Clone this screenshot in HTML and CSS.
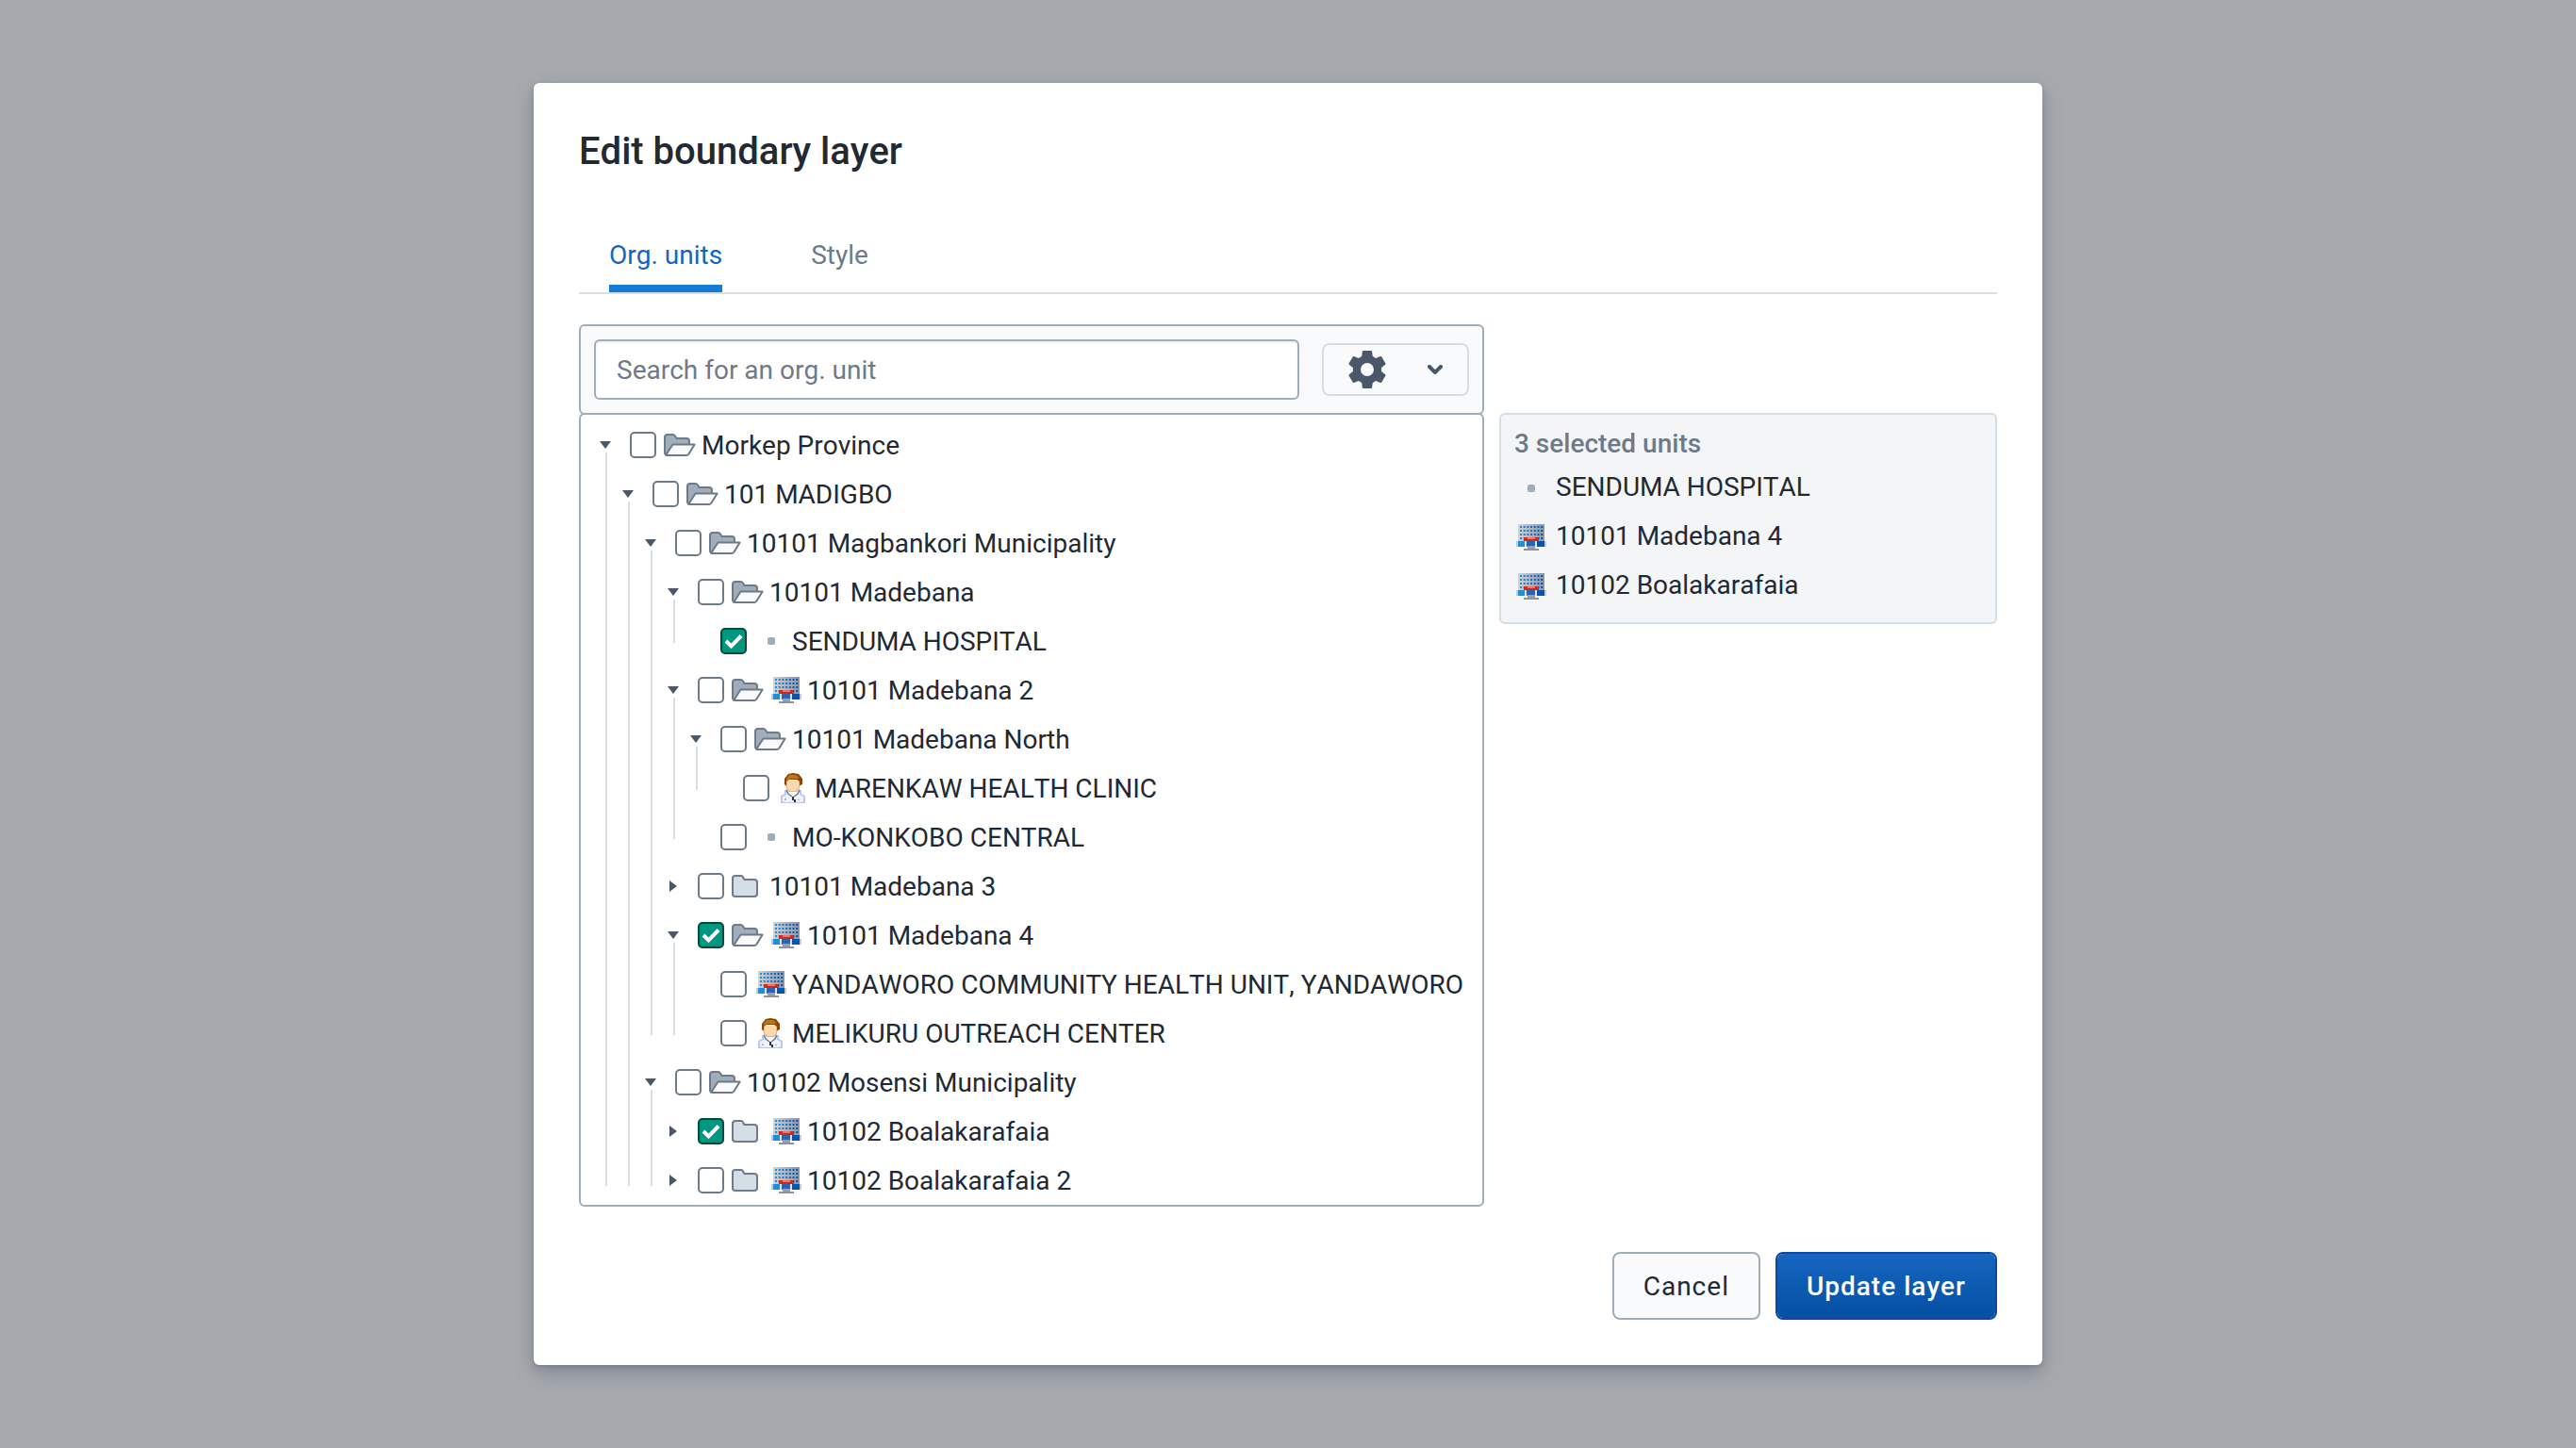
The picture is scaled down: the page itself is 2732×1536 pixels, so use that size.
FILE: index.html
```html
<!DOCTYPE html>
<html lang="en">
<head>
<meta charset="utf-8">
<title>Edit boundary layer</title>
<link rel="stylesheet" href="styles.css">
</head>
<body>
<svg class="sprite" aria-hidden="true">
  <defs>
    <linearGradient id="wall" x1="0" x2="1" y1="0" y2="0">
      <stop offset="0" stop-color="#d3d4d6"/>
      <stop offset="1" stop-color="#8a94a6"/>
    </linearGradient>
    <linearGradient id="glass" gradientUnits="userSpaceOnUse" x1="2" x2="30" y1="0" y2="0">
      <stop offset="0" stop-color="#2594d8"/>
      <stop offset="1" stop-color="#0449a8"/>
    </linearGradient>
    <symbol id="folder-open" viewBox="0 0 34 24">
      <path d="M2 22.500Q1 22 1 20V4Q1 1 4 1H9.500Q11 1 12 2.500L13.500 5H24Q27 5 27 8V12L20 22.500Z" fill="#a0adba" stroke="#6e7a8a" stroke-width="2"/>
      <path d="M9.500 11.500H32.600L26.500 21.500Q25.500 23 24 23H3.500Q2 23 3 21.500Z" fill="#f8fafc" stroke="#6e7a8a" stroke-width="2" stroke-linejoin="round"/>
    </symbol>
    <symbol id="folder" viewBox="0 0 28 24">
      <path d="M4 1H10Q11.500 1 12 2.500L13.500 5H24Q27 5 27 8V20Q27 23 24 23H4Q1 23 1 20V4Q1 1 4 1Z" fill="#d5dde5" stroke="#6e7a8a" stroke-width="2"/>
    </symbol>
    <symbol id="dot" viewBox="0 0 32 32"><rect x="12" y="12" width="8" height="8" rx="2" fill="#a0adba"/></symbol>
    <symbol id="hospital" viewBox="0 0 32 32">
      <path d="M2 2H30V22H2Z" fill="url(#wall)"/>
      <path d="M4 5H28.500M4 9H28.500M4 13H28.500M4 17H28.500" stroke="url(#glass)" stroke-width="2" stroke-dasharray="2 1.700" fill="none"/>
      <path d="M0 20H32V26H0Z" fill="#c3cbd9"/>
      <path d="M2 20H9V26H2Z" fill="#1f8fd6"/>
      <path d="M11 20H20V26H11Z" fill="#2a62b8"/>
      <path d="M22 20H30V26H22Z" fill="#0553b3"/>
      <path d="M9 20H11V26H9ZM20 20H22V26H20Z" fill="#dfe5ef"/>
      <path d="M8 16H24V20H8Z" fill="#cc2a1e"/>
      <path d="M12 16H20V18H12Z" fill="#ea7a68"/>
      <path d="M12 25H20V28H12Z" fill="#98a0ac"/>
      <path d="M8 28H24V30H8Z" fill="#8b939f"/>
    </symbol>
    <symbol id="doctor" viewBox="0 0 32 32">
      <path d="M6 18H24V22L28 24V32H2V24L6 22Z" fill="#bcc9ee"/>
      <path d="M8 20H22V23L26 25V30L24 31H6L4 30V25L8 23Z" fill="#eef4fd"/>
      <path d="M9 18H21L15 27Z" fill="#ffffff"/>
      <path d="M7 9Q4 11 7 14H8V17L11 20H19L22 17V14H23Q26 11 23 9Z" fill="#eab67f"/>
      <path d="M9 8H21V16L18 19H12L9 16Z" fill="#fad9b0"/>
      <path d="M6 12V6L10 1L15 0L21 1L25 6V12L22 13V9L19 7H11L8 9V13Z" fill="#8a4608"/>
      <path d="M8 6L11 2H18L22 5L19 6H12L8 8Z" fill="#c27414"/>
      <path d="M8 18L10 22L14 25M22 18L20 22L16 25" fill="none" stroke="#6b7796" stroke-width="1.500"/>
      <path d="M14 25H16V28H18V31H16V29H14Z" fill="#2e3345"/>
      <path d="M6 27H8V29H6ZM20 28H22V29H20Z" fill="#a9baf0"/>
    </symbol>
    <symbol id="arrow-down" viewBox="0 0 12 8"><path d="M0 0H12L6 8Z" fill="#4a5768"/></symbol>
    <symbol id="arrow-right" viewBox="0 0 8 12"><path d="M0 0L8 6L0 12Z" fill="#4a5768"/></symbol>
  </defs>
</svg>

<main class="modal" role="dialog" aria-labelledby="dialog-title">
  <h1 class="modal-title" id="dialog-title">Edit boundary layer</h1>

  <div class="tabs" role="tablist">
    <button class="tab tab-active" type="button" role="tab" aria-selected="true">Org. units</button>
    <button class="tab" type="button" role="tab" aria-selected="false">Style</button>
  </div>

  <div class="columns">
    <section class="picker">
      <div class="toolbar">
        <input class="search" type="text" placeholder="Search for an org. unit" aria-label="Search for an org. unit">
        <button class="settings" type="button" aria-label="Selection options">
          <svg class="gear" viewBox="0 0 40 40"><path fill="#4a5768" fill-rule="evenodd" d="M15.800 0H24.200Q25 0 25.100 .8L25.800 6L29.200 8L34 6Q34.900 5.700 35.300 6.400L39.400 13.500Q39.800 14.200 39.200 14.700L35.100 18V22L39.200 25.300Q39.800 25.800 39.400 26.500L35.300 33.600Q34.900 34.300 34 34L29.200 32L25.800 34L25.100 39.200Q25 40 24.200 40H15.800Q15 40 14.900 39.200L14.200 34L10.800 32L6 34Q5.100 34.300 4.700 33.600L.6 26.500Q.2 25.800 .8 25.300L4.900 22V18L.8 14.700Q.2 14.200 .6 13.500L4.700 6.400Q5.100 5.700 6 6L10.800 8L14.200 6L14.900 .8Q15 0 15.800 0ZM20 13A7 7 0 1 0 20 27A7 7 0 1 0 20 13Z"/></svg>
          <svg class="chevron" viewBox="0 0 16 10"><path d="M2 2L8 8L14 2" fill="none" stroke="#4a5768" stroke-width="4" stroke-linecap="round" stroke-linejoin="round"/></svg>
        </button>
      </div>

      <div class="tree">
        <ul class="nodes">
          <li class="node node-open node-continues">
            <div class="row">
              <button class="toggle" type="button" aria-label="Collapse"><svg class="down"><use href="#arrow-down"/></svg></button>
              <label class="unit"><input class="check" type="checkbox"><span class="slot"><svg class="folder-open"><use href="#folder-open"/></svg></span><span class="unit-name">Morkep Province</span></label>
            </div>
            <ul class="nodes nested">
              <li class="node node-open node-continues">
                <div class="row">
                  <button class="toggle" type="button" aria-label="Collapse"><svg class="down"><use href="#arrow-down"/></svg></button>
                  <label class="unit"><input class="check" type="checkbox"><span class="slot"><svg class="folder-open"><use href="#folder-open"/></svg></span><span class="unit-name">101 MADIGBO</span></label>
                </div>
                <ul class="nodes nested">
                  <li class="node node-open">
                    <div class="row">
                      <button class="toggle" type="button" aria-label="Collapse"><svg class="down"><use href="#arrow-down"/></svg></button>
                      <label class="unit"><input class="check" type="checkbox"><span class="slot"><svg class="folder-open"><use href="#folder-open"/></svg></span><span class="unit-name">10101 Magbankori Municipality</span></label>
                    </div>
                    <ul class="nodes nested">
                      <li class="node node-open">
                        <div class="row">
                          <button class="toggle" type="button" aria-label="Collapse"><svg class="down"><use href="#arrow-down"/></svg></button>
                          <label class="unit"><input class="check" type="checkbox"><span class="slot"><svg class="folder-open"><use href="#folder-open"/></svg></span><span class="unit-name">10101 Madebana</span></label>
                        </div>
                        <ul class="nodes nested">
                          <li class="node">
                            <div class="row leaf">
                              <label class="unit"><input class="check" type="checkbox" checked><span class="slot slot-symbol"><svg class="symbol"><use href="#dot"/></svg></span><span class="unit-name">SENDUMA HOSPITAL</span></label>
                            </div>
                          </li>
                        </ul>
                      </li>
                      <li class="node node-open">
                        <div class="row">
                          <button class="toggle" type="button" aria-label="Collapse"><svg class="down"><use href="#arrow-down"/></svg></button>
                          <label class="unit"><input class="check" type="checkbox"><span class="slot"><svg class="folder-open"><use href="#folder-open"/></svg></span><span class="slot slot-symbol"><svg class="symbol"><use href="#hospital"/></svg></span><span class="unit-name">10101 Madebana 2</span></label>
                        </div>
                        <ul class="nodes nested">
                          <li class="node node-open">
                            <div class="row">
                              <button class="toggle" type="button" aria-label="Collapse"><svg class="down"><use href="#arrow-down"/></svg></button>
                              <label class="unit"><input class="check" type="checkbox"><span class="slot"><svg class="folder-open"><use href="#folder-open"/></svg></span><span class="unit-name">10101 Madebana North</span></label>
                            </div>
                            <ul class="nodes nested">
                              <li class="node">
                                <div class="row leaf">
                                  <label class="unit"><input class="check" type="checkbox"><span class="slot slot-symbol"><svg class="symbol"><use href="#doctor"/></svg></span><span class="unit-name">MARENKAW HEALTH CLINIC</span></label>
                                </div>
                              </li>
                            </ul>
                          </li>
                          <li class="node">
                            <div class="row leaf">
                              <label class="unit"><input class="check" type="checkbox"><span class="slot slot-symbol"><svg class="symbol"><use href="#dot"/></svg></span><span class="unit-name">MO-KONKOBO CENTRAL</span></label>
                            </div>
                          </li>
                        </ul>
                      </li>
                      <li class="node">
                        <div class="row">
                          <button class="toggle" type="button" aria-label="Expand"><svg class="right"><use href="#arrow-right"/></svg></button>
                          <label class="unit"><input class="check" type="checkbox"><span class="slot"><svg class="folder"><use href="#folder"/></svg></span><span class="unit-name">10101 Madebana 3</span></label>
                        </div>
                      </li>
                      <li class="node node-open">
                        <div class="row">
                          <button class="toggle" type="button" aria-label="Collapse"><svg class="down"><use href="#arrow-down"/></svg></button>
                          <label class="unit"><input class="check" type="checkbox" checked><span class="slot"><svg class="folder-open"><use href="#folder-open"/></svg></span><span class="slot slot-symbol"><svg class="symbol"><use href="#hospital"/></svg></span><span class="unit-name">10101 Madebana 4</span></label>
                        </div>
                        <ul class="nodes nested">
                          <li class="node">
                            <div class="row leaf">
                              <label class="unit"><input class="check" type="checkbox"><span class="slot slot-symbol"><svg class="symbol"><use href="#hospital"/></svg></span><span class="unit-name">YANDAWORO COMMUNITY HEALTH UNIT, YANDAWORO</span></label>
                            </div>
                          </li>
                          <li class="node">
                            <div class="row leaf">
                              <label class="unit"><input class="check" type="checkbox"><span class="slot slot-symbol"><svg class="symbol"><use href="#doctor"/></svg></span><span class="unit-name">MELIKURU OUTREACH CENTER</span></label>
                            </div>
                          </li>
                        </ul>
                      </li>
                    </ul>
                  </li>
                  <li class="node node-open node-continues">
                    <div class="row">
                      <button class="toggle" type="button" aria-label="Collapse"><svg class="down"><use href="#arrow-down"/></svg></button>
                      <label class="unit"><input class="check" type="checkbox"><span class="slot"><svg class="folder-open"><use href="#folder-open"/></svg></span><span class="unit-name">10102 Mosensi Municipality</span></label>
                    </div>
                    <ul class="nodes nested">
                      <li class="node">
                        <div class="row">
                          <button class="toggle" type="button" aria-label="Expand"><svg class="right"><use href="#arrow-right"/></svg></button>
                          <label class="unit"><input class="check" type="checkbox" checked><span class="slot"><svg class="folder"><use href="#folder"/></svg></span><span class="slot slot-symbol"><svg class="symbol"><use href="#hospital"/></svg></span><span class="unit-name">10102 Boalakarafaia</span></label>
                        </div>
                      </li>
                      <li class="node">
                        <div class="row">
                          <button class="toggle" type="button" aria-label="Expand"><svg class="right"><use href="#arrow-right"/></svg></button>
                          <label class="unit"><input class="check" type="checkbox"><span class="slot"><svg class="folder"><use href="#folder"/></svg></span><span class="slot slot-symbol"><svg class="symbol"><use href="#hospital"/></svg></span><span class="unit-name">10102 Boalakarafaia 2</span></label>
                        </div>
                      </li>
                    </ul>
                  </li>
                </ul>
              </li>
            </ul>
          </li>
        </ul>
      </div>
    </section>

    <aside class="selected">
      <h2 class="selected-title">3 selected units</h2>
      <ul class="nodes">
        <li class="picked"><svg class="symbol"><use href="#dot"/></svg><span class="picked-name">SENDUMA HOSPITAL</span></li>
        <li class="picked"><svg class="symbol"><use href="#hospital"/></svg><span class="picked-name">10101 Madebana 4</span></li>
        <li class="picked"><svg class="symbol"><use href="#hospital"/></svg><span class="picked-name">10102 Boalakarafaia</span></li>
      </ul>
    </aside>
  </div>

  <div class="actions">
    <button class="button" type="button">Cancel</button>
    <button class="button button-primary" type="button">Update layer</button>
  </div>
</main>
</body>
</html>
```
FILE: styles.css
```css
* {
  box-sizing: border-box;
}

body {
  margin: 0;
  min-height: 100vh;
  padding: 48px;
  display: flex;
  align-items: center;
  justify-content: center;
  background: #a6a9ae;
  color: #212934;
  font: 400 28px/36px Roboto, "Liberation Sans", sans-serif;
  font-kerning: none;
}

button,
input {
  margin: 0;
  font: inherit;
  font-kerning: inherit;
  color: inherit;
}

button {
  cursor: pointer;
}

svg {
  display: block;
  flex: none;
}

.sprite {
  position: absolute;
  width: 0;
  height: 0;
}

.modal {
  width: 100%;
  max-width: 1600px;
  padding: 48px;
  border-radius: 6px;
  background: #ffffff;
  box-shadow: 0 8px 20px rgba(64, 75, 100, 0.35), 0 2px 4px rgba(64, 75, 90, 0.25);
}

.modal-title {
  margin: 0 0 34px;
  font-size: 40px;
  line-height: 50px;
  font-weight: 500;
}

/* Tabs */

.tabs {
  display: flex;
  gap: 94px;
  padding: 0 32px;
  border-bottom: 2px solid #d5dde5;
  margin-bottom: 32px;
}

.tab {
  padding: 33px 0 13px;
  border: 0;
  border-bottom: 8px solid transparent;
  background: none;
  color: #6e7a8a;
}

.tab-active {
  border-bottom-color: #147cd7;
  color: #1565c0;
}

/* Picker */

.columns {
  display: grid;
  grid-template-columns: 960fr 528fr;
  gap: 16px;
  align-items: start;
}

.toolbar {
  display: flex;
  align-items: center;
  gap: 24px;
  padding: 14px;
  border: 2px solid #a0adba;
  border-radius: 6px;
  background: #f8fafc;
}

.search {
  flex: 1;
  min-width: 0;
  height: 64px;
  padding: 0 22px;
  border: 2px solid #a0adba;
  border-radius: 6px;
  background: #ffffff;
  box-shadow: inset 0 2px 2px rgba(48, 54, 60, 0.08);
}

.search::placeholder {
  color: #6e7a8a;
  opacity: 1;
}

.settings {
  display: flex;
  align-items: center;
  gap: 44px;
  height: 56px;
  padding: 0 26px;
  border: 2px solid #d5dde5;
  border-radius: 8px;
  background: #f8fafc;
}

.gear {
  width: 40px;
  height: 40px;
}

.chevron {
  width: 16px;
  height: 10px;
}

.tree {
  margin-top: -2px;
  padding: 6px 14px 0;
  border: 2px solid #a0adba;
  border-radius: 6px;
}

.nodes {
  list-style: none;
  margin: 0;
  padding: 0;
}

.nested {
  padding-left: 24px;
}

.node {
  position: relative;
}

/* Guide line from a parent's arrow to its last child */
.node-open::before {
  content: "";
  position: absolute;
  left: 12px;
  top: 34px;
  bottom: 24px;
  width: 2px;
  background: #d5dde5;
}

.node-continues::before {
  bottom: 20px;
}

.row {
  display: flex;
  align-items: center;
  gap: 14px;
  height: 52px;
}

.leaf {
  padding-left: 38px;
}

.toggle {
  display: flex;
  align-items: center;
  justify-content: center;
  width: 24px;
  height: 24px;
  padding: 0;
  border: 0;
  background: none;
}

.down {
  width: 12px;
  height: 8px;
}

.right {
  width: 8px;
  height: 12px;
}

.unit {
  display: flex;
  align-items: center;
  white-space: nowrap;
  cursor: pointer;
}

.unit-name {
  padding-top: 2px;
}

.check {
  appearance: none;
  flex: none;
  width: 28px;
  height: 28px;
  margin-right: 8px;
  border: 2px solid #6e7a8a;
  border-radius: 5px;
  background: #ffffff;
}

.check:checked {
  border-color: #004d40;
  background: #00967f url("data:image/svg+xml,%3Csvg xmlns='http://www.w3.org/2000/svg' viewBox='0 0 24 24'%3E%3Cpath d='M4 12L9.500 17.500L20 6.500' fill='none' stroke='%23fff' stroke-width='4'/%3E%3C/svg%3E") center / 24px 24px no-repeat;
}

.slot {
  flex: none;
  width: 40px;
}

.slot-symbol {
  padding-left: 2px;
}

.folder-open {
  width: 34px;
  height: 24px;
}

.folder {
  width: 28px;
  height: 24px;
}

.symbol {
  width: 32px;
  height: 32px;
}

/* Selection summary */

.selected {
  margin-top: 94px;
  padding: 14px 14px 12px;
  border: 2px solid #d5dde5;
  border-radius: 6px;
  background: #f3f5f7;
}

.selected-title {
  margin: 0 0 4px;
  color: #6e7a8a;
  font-size: 28px;
  line-height: 34px;
  font-weight: 500;
}

.picked {
  display: flex;
  align-items: center;
  gap: 10px;
  height: 52px;
  padding-left: 2px;
}

.picked-name {
  padding-bottom: 2px;
}

/* Footer */

.actions {
  display: flex;
  justify-content: flex-end;
  gap: 16px;
  margin-top: 48px;
}

.button {
  height: 72px;
  padding: 2px 31px 0;
  border: 2px solid #a0adba;
  border-radius: 8px;
  background: #f8fafc;
  letter-spacing: 1px;
}

.button-primary {
  border-color: #0d47a1;
  background: linear-gradient(#1565c0, #0650a3) padding-box;
  color: #ffffff;
  font-weight: 500;
}
```
